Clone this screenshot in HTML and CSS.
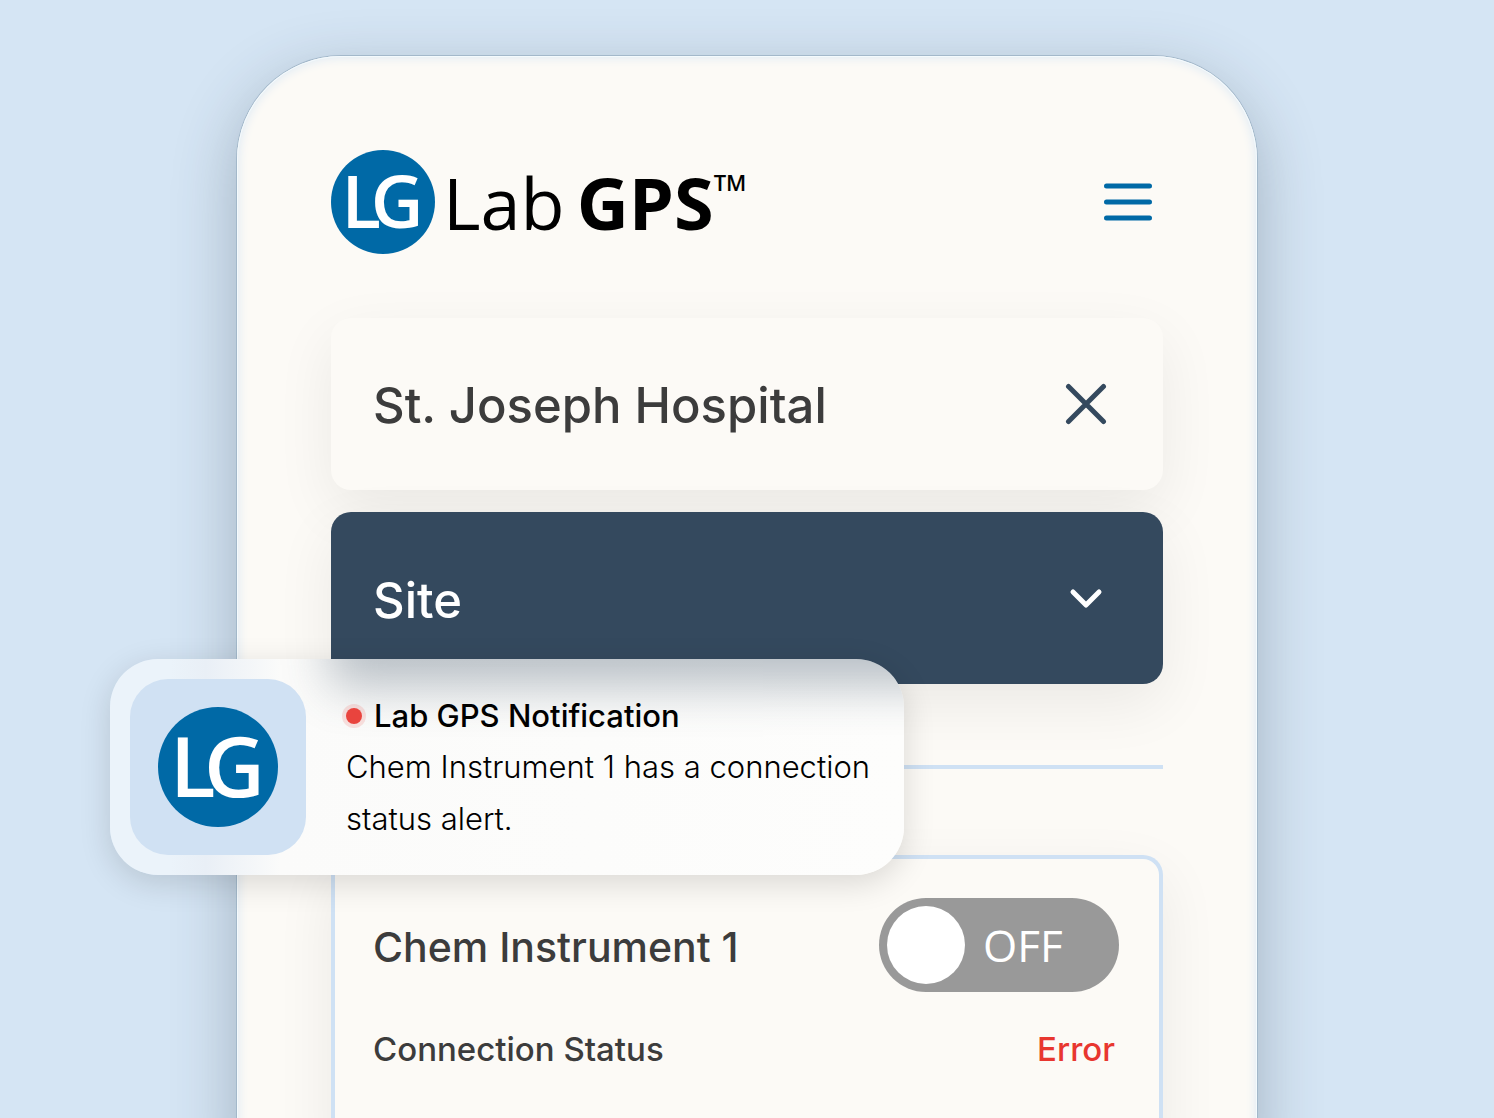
FILE: index.html
```html
<!DOCTYPE html>
<html lang="en">
<head>
    <meta charset="UTF-8">
    <meta name="viewport" content="width=device-width, initial-scale=1.0">
    <title>Lab GPS</title>
    <link rel="stylesheet" href="styles.css">
</head>
<body>
    <main class="phone">
        <header class="header">
            <a class="brand" href="#">
                <svg class="brand-mark" viewBox="0 0 120 120" aria-hidden="true">
                    <circle cx="60" cy="60" r="60" />
                    <text x="12 46" y="90">LG</text>
                </svg>
                <span class="brand-name">Lab</span>
                <strong class="brand-strong">GPS</strong>
                <span class="brand-tm">TM</span>
            </a>
            <button class="icon-btn" type="button" aria-label="Menu">
                <svg class="menu-icon" viewBox="0 0 50 40" aria-hidden="true">
                    <path d="M3.5 4H46.500M3.500 20H46.500M3.500 36H46.500" />
                </svg>
            </button>
        </header>

        <section class="panel">
            <h1 class="panel-title">St. Joseph Hospital</h1>
            <button class="icon-btn" type="button" aria-label="Close">
                <svg class="close-icon" viewBox="0 0 42 42" aria-hidden="true">
                    <path d="M3.500 3.500L38.500 38.500M38.500 3.500L3.500 38.500" />
                </svg>
            </button>
        </section>

        <div class="site">
            <select class="site-select" aria-label="Site">
                <option>Site</option>
            </select>
            <svg class="chevron-icon" viewBox="0 0 34 22" aria-hidden="true">
                <path d="M4 5L17 18L30 5" />
            </svg>
        </div>

        <hr class="divider">

        <section class="instrument">
            <div class="row">
                <h2 class="instrument-name">Chem Instrument 1</h2>
                <label class="toggle">
                    <input class="toggle-input" type="checkbox" role="switch" aria-label="Chem Instrument 1">
                    <span class="toggle-knob"></span>
                    <span class="toggle-text">OFF</span>
                </label>
            </div>
            <div class="row status">
                <span>Connection Status</span>
                <span class="status-error">Error</span>
            </div>
        </section>

        <aside class="notification">
            <div class="notification-icon">
                <svg class="brand-mark brand-mark-large" viewBox="0 0 120 120" aria-hidden="true">
                    <circle cx="60" cy="60" r="60" />
                    <text x="12 46" y="90">LG</text>
                </svg>
            </div>
            <div class="notification-body">
                <h3 class="notification-title"><span class="dot"></span>Lab GPS Notification</h3>
                <p class="notification-text">Chem Instrument 1 has a connection status alert.</p>
            </div>
        </aside>
    </main>
</body>
</html>
```
FILE: styles.css
```css
* {
    margin: 0;
    padding: 0;
    box-sizing: border-box;
}

body {
    font-family: Inter, "Liberation Sans", sans-serif;
    background: #d5e5f4;
    height: 100vh;
    padding-top: 56px;
    display: flex;
    justify-content: center;
    overflow: hidden;
}

/* runs past the bottom of the window */
.phone {
    position: relative;
    width: 100%;
    max-width: 1020px;
    margin-bottom: -40px;
    padding: 94px 94px 0;
    display: flex;
    flex-direction: column;
    background: #fcfaf6;
    border-radius: 104px 104px 0 0;
    box-shadow: 0 0 0 1px #a3b8ca, 0 20px 64px rgba(50, 65, 80, 0.32), inset 0 0 0 1px #f4fafd, inset 0 0 12px #d5e5f4;
}

.header {
    display: flex;
    align-items: center;
    justify-content: space-between;
    height: 104px;
    padding-right: 10px;
    margin-bottom: 64px;
}

.brand {
    display: flex;
    align-items: center;
    font-family: "Open Sans", "Noto Sans", sans-serif;
    font-size: 72px;
    line-height: 100px;
    color: #000;
    text-decoration: none;
}

.brand-mark {
    width: 104px;
    height: 104px;
    fill: #0069a6;
}

.brand-mark text {
    fill: #fff;
    font-family: "Open Sans", "Noto Sans", sans-serif;
    font-size: 84px;
    font-weight: 600;
}

.brand-mark-large {
    width: 120px;
    height: 120px;
}

.brand-name {
    margin-left: 8px;
}

.brand-strong {
    margin-left: 12px;
    font-weight: 700;
}

.brand-tm {
    align-self: flex-start;
    font-size: 22px;
    font-weight: 600;
    line-height: 64px;
}

.icon-btn {
    display: flex;
    border: none;
    background: none;
    cursor: pointer;
}

.icon-btn svg,
.chevron-icon {
    fill: none;
    stroke-linecap: round;
    stroke-linejoin: round;
}

.menu-icon {
    width: 50px;
    height: 40px;
    stroke: #0069a6;
    stroke-width: 5;
}

.panel {
    display: flex;
    align-items: center;
    justify-content: space-between;
    height: 172px;
    padding: 0 56px 0 42px;
    margin-bottom: 22px;
    border-radius: 20px;
    background: #fcfaf6;
    box-shadow: 0 20px 60px rgba(0, 0, 0, 0.07);
}

.panel-title {
    padding-top: 4px;
    font-size: 49px;
    font-weight: 500;
    line-height: 60px;
    color: #3c3c3c;
}

.close-icon {
    width: 42px;
    height: 42px;
    stroke: #34495e;
    stroke-width: 5;
}

.site {
    display: grid;
    align-items: center;
    margin-bottom: 81px;
    border-radius: 20px;
    box-shadow: 0 20px 60px rgba(0, 0, 0, 0.07);
}

.site-select {
    grid-area: 1 / 1;
    height: 172px;
    padding: 4px 42px 0;
    border: none;
    border-radius: 20px;
    appearance: none;
    background: #34495e;
    color: #fff;
    font-family: inherit;
    font-size: 49px;
    font-weight: 500;
}

.chevron-icon {
    grid-area: 1 / 1;
    justify-self: end;
    width: 34px;
    height: 22px;
    margin-right: 60px;
    stroke: #fff;
    stroke-width: 5;
    pointer-events: none;
}

.divider {
    flex: none;
    height: 4px;
    margin-bottom: 86px;
    border: none;
    background: #cfe1f4;
}

.instrument {
    flex: 1;
    padding: 39px 40px 0 38px;
    border: 4px solid #cfe1f4;
    border-bottom: none;
    border-radius: 20px 20px 0 0;
    background: #fcfaf6;
    box-shadow: 0 20px 60px rgba(0, 0, 0, 0.07);
}

.row {
    display: flex;
    align-items: center;
    justify-content: space-between;
}

.instrument-name {
    padding-top: 4px;
    font-size: 41px;
    font-weight: 500;
    line-height: 52px;
    color: #3c3c3c;
}

.toggle {
    position: relative;
    display: flex;
    align-items: center;
    gap: 18px;
    width: 240px;
    height: 94px;
    padding: 8px;
    border-radius: 47px;
    background: #999;
    cursor: pointer;
}

.toggle-input {
    position: absolute;
    inset: 0;
    appearance: none;
    cursor: pointer;
}

.toggle-knob {
    width: 78px;
    height: 78px;
    border-radius: 50%;
    background: #fff;
}

.toggle-text {
    font-family: "Open Sans", "Noto Sans", sans-serif;
    font-size: 44px;
    color: #fff;
}

.status {
    margin-top: 36px;
    padding-right: 4px;
    font-size: 33px;
    font-weight: 500;
    line-height: 42px;
    color: #3c3c3c;
}

.status-error {
    color: #e8362f;
}

/* floats over the phone's left edge */
.notification {
    position: absolute;
    top: 603px;
    left: -127px;
    width: 794px;
    display: flex;
    gap: 40px;
    padding: 20px;
    overflow: hidden;
    isolation: isolate;
    border-radius: 48px;
    background: linear-gradient(90deg, #ebf3fa 60px, #e9eff6 96px, #fbfbfa 170px, #fdfdfc);
    box-shadow: 0 8px 32px rgba(0, 0, 0, 0.14);
}

/* frosted shade of the dark bar behind the top edge */
.notification::before {
    content: "";
    position: absolute;
    z-index: -1;
    top: -60px;
    left: 220px;
    right: -80px;
    height: 88px;
    background: #34495e;
    opacity: 0.33;
    filter: blur(24px);
}

.notification-icon {
    flex: none;
    display: flex;
    align-items: center;
    justify-content: center;
    width: 176px;
    height: 176px;
    border-radius: 38px;
    background: #d0e1f3;
}

.notification-body {
    padding-top: 12px;
    color: #000;
}

.notification-title {
    display: flex;
    align-items: center;
    gap: 12px;
    font-size: 31px;
    font-weight: 500;
    line-height: 50px;
}

.dot {
    width: 16px;
    height: 16px;
    border-radius: 50%;
    background: #e9443e;
    box-shadow: 0 0 0 4px rgba(233, 68, 62, 0.15);
}

.notification-text {
    font-size: 31px;
    font-weight: 300;
    line-height: 52px;
}
```
